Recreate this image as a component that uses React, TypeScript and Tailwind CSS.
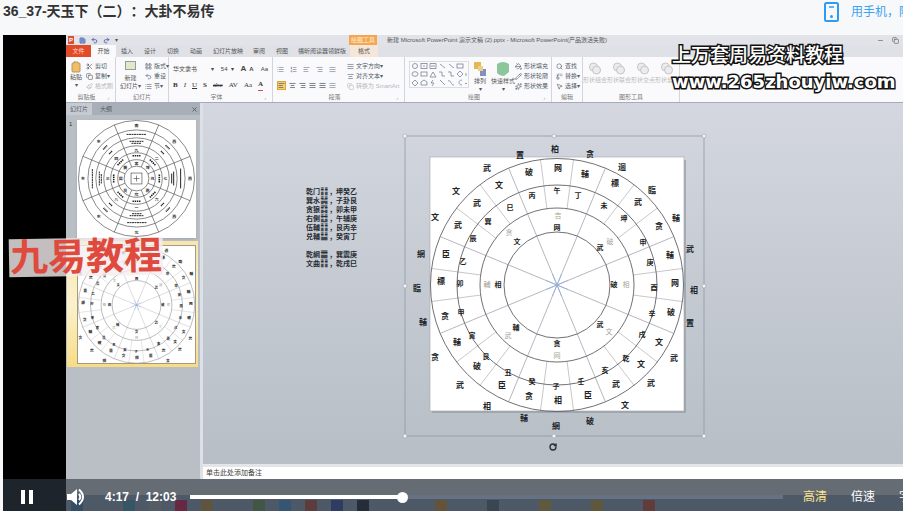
import React, { useState } from 'react';
import { Save, Undo2, Redo2, Scissors, Copy, Paintbrush, Clipboard, Minus, X, Search, Replace, MousePointer2, PaintBucket, Pencil, Sparkles, List, ListOrdered, AlignLeft, AlignCenter, AlignRight, AlignJustify, RotateCw, LayoutGrid } from 'lucide-react';

type Glyph = [number, number, string];

const outside: Glyph[] = [
  [555, 149, '柏'], [590, 154, '贪'], [622, 167, '迴'], [652, 190, '臨'], [676, 218, '輔'], [690, 249, '武'],
  [694, 290, '相'], [690, 323, '置'], [674, 358, '武'], [651, 383, '武'], [625, 405, '文'], [590, 421, '破'],
  [556, 426, '網'], [524, 418, '輔'], [487, 406, '相'], [460, 385, '武'], [435, 357, '贪'], [423, 322, '輔'],
  [417, 288, '臨'], [421, 254, '網'], [435, 217, '文'], [456, 191, '文'], [487, 168, '武'], [520, 155, '置'],
];
const outer: Glyph[] = [
  [558, 168, '网'], [585, 174, '輔'], [615, 183, '標'], [638, 202, '武'], [659, 226, '贪'], [670, 255, '輔'],
  [675, 283, '网'], [671, 312, '破'], [659, 342, '文'], [641, 364, '文'], [616, 384, '武'], [588, 395, '臣'],
  [558, 400, '相'], [529, 396, '贪'], [502, 385, '臣'], [477, 366, '破'], [457, 342, '輔'], [445, 316, '贪'],
  [441, 281, '標'], [446, 254, '臣'], [458, 225, '武'], [477, 203, '武'], [499, 185, '文'], [529, 172, '破'],
];
const mountains: Glyph[] = [
  [557, 190, '午'], [578, 195, '丁'], [604, 205, '未'], [624, 218, '坤'], [643, 242, '申'], [650, 262, '庚'],
  [654, 287, '酉'], [652, 313, '辛'], [642, 334, '戌'], [626, 358, '乾'], [605, 370, '亥'], [581, 381, '壬'],
  [556, 386, '子'], [532, 381, '癸'], [508, 372, '丑'], [486, 356, '艮'], [472, 335, '寅'], [461, 312, '甲'],
  [460, 283, '卯'], [463, 261, '乙'], [473, 238, '辰'], [488, 221, '巽'], [510, 207, '巳'], [532, 195, '丙'],
];
const faint: Glyph[] = [
  [558, 215, '吉'], [610, 241, '破'], [626, 284, '相'], [609, 331, '文'],
  [557, 355, '网'], [508, 335, '武'], [487, 284, '輔'], [509, 232, '贪'],
];
const inner: Glyph[] = [
  [557, 227, '网'], [600, 247, '武'], [614, 284, '破'], [600, 324, '武'],
  [557, 343, '贪'], [516, 327, '輔'], [498, 284, '相'], [517, 241, '文'],
];

const CX = 557;
const CY = 285;

function spoke(cx: number, cy: number, deg: number, from: number, to: number) {
  const a = (deg * Math.PI) / 180;
  return { x1: cx + Math.sin(a) * from, y1: cy - Math.cos(a) * from, x2: cx + Math.sin(a) * to, y2: cy - Math.cos(a) * to };
}

function Glyphs({ items, className }: { items: Glyph[]; className: string }) {
  return (
    <g className={className}>
      {items.map(([x, y, c], i) => (
        <text key={i} x={x} y={y + 3} textAnchor="middle">{c}</text>
      ))}
    </g>
  );
}

function Compass() {
  const angles = Array.from({ length: 24 }, (_, i) => 7.5 + i * 15);
  return (
    <g fontFamily="'Noto Sans CJK SC', sans-serif">
      <g stroke="#b4b4ba" strokeWidth="0.8">
        {angles.map((a) => (
          <line key={a} {...spoke(CX, CY, a, (a - 22.5) % 45 === 0 ? 0 : 77, 126.5)} stroke={(a - 22.5) % 45 === 0 ? '#a3a3b2' : '#b9b9bd'} />
        ))}
      </g>
      <g stroke="#8faee0" strokeWidth="0.8">
        {[22.5, 67.5, 112.5, 157.5, 202.5, 247.5, 292.5, 337.5].map((a) => (
          <line key={a} {...spoke(CX, CY, a, 0, 12)} />
        ))}
      </g>
      <g fill="none" stroke="#606065" strokeWidth="0.9">
        {[53, 77, 100, 126.5].map((r) => <circle key={r} cx={CX} cy={CY} r={r} />)}
      </g>
      <Glyphs items={outside} className="fill-[#20242a] text-[8px] font-bold" />
      <Glyphs items={outer} className="fill-[#222] text-[8px] font-bold" />
      <Glyphs items={mountains} className="fill-[#222] text-[7px] font-bold" />
      <Glyphs items={inner} className="fill-[#222] text-[7px] font-bold" />
      <Glyphs items={faint} className="fill-[#a5a596] text-[7px]" />
    </g>
  );
}

function TrigramWheel() {
  const dirs = [0, 45, 90, 135, 180, 225, 270, 315];
  const at = (d: number, r: number) => spoke(60, 59, d, 0, r);
  return (
    <svg viewBox="0 0 120 119" className="block w-full bg-white" role="img" aria-label="幻灯片 1">
      <g fill="none" stroke="#555" strokeWidth="0.7">
        {[12.5, 19, 26, 33, 41, 49, 58.5].map((r) => <circle key={r} cx="60" cy="59" r={r} />)}
        {dirs.map((d) => <line key={d} {...spoke(60, 59, d + 22.5, 12.5, 58.5)} />)}
        <rect x="54.5" y="53.5" width="11" height="11" />
        <path d="M60 56v6M57 59h6" />
      </g>
      {dirs.map((d) => (
        <g key={d} transform={`rotate(${d} 60 59)`} fill="none" stroke="#222">
          <path d="M56 36h8" strokeWidth="1.6" strokeDasharray="1.5 .7" />
          {d % 90 === 0 && <path d="M50 14.5h20M53 21.5h14M55 23.5h10" strokeDasharray={d === 90 ? undefined : '2 .5'} />}
          {d % 90 !== 0 && <path d="M57 14.5h6M58 22h4" strokeDasharray="1 .5" strokeWidth="1.6" />}
        </g>
      ))}
      <g className="fill-[#333] text-[4px] font-bold" fontFamily="'Noto Sans CJK SC', sans-serif" textAnchor="middle">
        {dirs.map((d, i) => (
          <g key={d}>
            <text x={at(d, 16).x2} y={at(d, 16).y2 + 2}>{'离坤兑乾坎艮震巽'[i]}</text>
            <text x={at(d, 29).x2} y={at(d, 29).y2 + 2}>{'九二七六一八三四'[i]}</text>
            <text x={at(d, 54).x2} y={at(d, 54).y2 + 2}>{'南西西西北东东东'[i]}</text>
          </g>
        ))}
      </g>
    </svg>
  );
}

function Group({ label, width, corner = true, gap = 'gap-1 px-1', children }: { label: string; width: string; corner?: boolean; gap?: string; children: React.ReactNode }) {
  return (
    <section className={`${width} flex shrink-0 flex-col border-r border-[#d3d5da]`}>
      <div className={`${gap} flex h-9 items-start pt-1`}>{children}</div>
      <div className="flex h-[9px] items-center justify-center text-[6px] leading-[9px] text-[#777]">
        <span className="flex-1 text-center">{label}</span>
        {corner && <span className="w-2 text-[5px]">⌟</span>}
      </div>
    </section>
  );
}

function Tool({ icon, children, faded = false }: { icon: React.ReactNode; children?: React.ReactNode; faded?: boolean }) {
  return (
    <button className={`flex h-[10px] items-center gap-[2px] whitespace-nowrap text-[6px] leading-[10px] ${faded ? 'text-[#b5b5b8]' : 'text-[#505a68]'}`}>
      {icon}{children}
    </button>
  );
}

function BigTool({ icon, lines, faded = false }: { icon: React.ReactNode; lines: string[]; faded?: boolean }) {
  return (
    <button className={`flex flex-col items-center whitespace-nowrap text-[6px] leading-[8px] ${faded ? 'text-[#bbb]' : 'text-[#555]'}`}>
      {icon}
      {lines.map((l) => <span key={l}>{l}</span>)}
    </button>
  );
}

const tabs: [string, string][] = [
  ['插入', 'w-[22px]'], ['设计', 'w-6'], ['切换', 'w-[22px]'], ['动画', 'w-6'], ['幻灯片放映', 'w-10'],
  ['审阅', 'w-[22px]'], ['视图', 'w-6'], ['福昕阅读器领鲜版', 'w-14'],
];

function Ribbon() {
  const i = 'size-[7px]';
  return (
    <header className="shrink-0 bg-[#dfe1e6]">
      <div className="flex h-[10px] items-center bg-[#e1e3e8] text-[6px] leading-[10px] text-[#555]">
        <div className="flex w-[283px] items-center gap-[5px] pl-[2px] text-[#4964ae]">
          <span className="bg-[#d95036] px-[1px] text-[6px] leading-[8px] font-bold text-white">P</span>
          <Save className="size-[7px] fill-[#8fa3d6]" /><Undo2 className={i} strokeWidth={3} /><Redo2 className={i} strokeWidth={3} /><span className="text-[#555]">▾</span>
        </div>
        <span className="w-7 bg-[#f4a750] text-center text-[#fff1dc]">绘图工具</span>
        <h2 className="ml-[10px] whitespace-nowrap">新建 Microsoft PowerPoint 演示文稿 (2).pptx - Microsoft PowerPoint(产品激活失败)</h2>
        <span className="ml-auto flex gap-2 pr-1"><Minus className={i} /><Copy className={i} /></span>
      </div>
      <nav className="flex h-3 items-center text-center text-[6px] leading-3 whitespace-nowrap text-[#555]">
        <button className="h-3 w-[25px] bg-[#e34b28] text-[#ffd8c8]">文件</button>
        <button className="h-3 w-[25px] bg-[#fafafc]">开始</button>
        {tabs.map(([t, w]) => <button key={t} className={w}>{t}</button>)}
        <button className="h-3 w-7 bg-[#f4e6d8]">格式</button>
      </nav>
      <div className="flex h-[46px] border-b border-[#a6abb5] bg-[#fafafc]">
        <Group label="剪贴板" width="w-[50px]" gap="gap-1 px-1">
          <BigTool icon={<Clipboard className="size-3 fill-[#f0bd68] text-[#b8955d]" />} lines={['粘贴', '▾']} />
          <div>
            <Tool icon={<Scissors className={i} />}>剪切</Tool>
            <Tool icon={<Copy className={i} />}>复制▾</Tool>
            <Tool faded icon={<Paintbrush className={i} />}>格式刷</Tool>
          </div>
        </Group>
        <Group label="幻灯片" width="w-[53px]" corner={false}>
          <BigTool icon={<span className="mb-1 h-[9px] w-[11px] border border-[#99a] bg-[#e2eac5]" />} lines={['新建', '幻灯片▾']} />
          <div>
            <Tool icon={<LayoutGrid className={i} />}>版式▾</Tool>
            <Tool icon={<Undo2 className={i} />}>重设</Tool>
            <Tool icon={<List className={i} />}>节▾</Tool>
          </div>
        </Group>
        <Group label="字体" width="w-[104px]">
          <div className="w-full">
            <div className="flex h-4 items-center gap-[3px] text-[6px] whitespace-nowrap text-[#444]">
              <span className="w-9">华文隶书</span><span>▾</span><span className="ml-1">54</span><span>▾</span><b className="ml-1 text-[8px]">A</b><b>A</b><span className="ml-1">Aa</span>
            </div>
            <div className="flex h-4 items-center gap-[6px] font-['Liberation_Serif',serif] text-[7px] text-[#333]">
              <b>B</b><i>I</i><u>U</u><b>S</b><s>abc</s><span>AV</span><span>Aa</span><b className="border-b border-[#c55]">A</b>
            </div>
          </div>
        </Group>
        <Group label="段落" width="w-[132px]">
          <div className="w-[66px] text-[#68717e]">
            <div className="flex h-4 items-center gap-[6px]"><List className={i} /><ListOrdered className={i} /><AlignLeft className={i} /><AlignRight className={i} /><AlignJustify className={i} /></div>
            <div className="flex h-4 items-center gap-[3px]">
              <span className="border border-[#d9a63f] bg-[#fbd268]"><AlignLeft className={i} strokeWidth={3} /></span><AlignCenter className={i} strokeWidth={3} /><AlignRight className={i} strokeWidth={3} /><AlignJustify className={i} strokeWidth={3} /><AlignJustify className={i} strokeWidth={3} /><AlignJustify className={i} />
            </div>
          </div>
          <div>
            <Tool icon={<AlignJustify className={i} />}>文字方向▾</Tool>
            <Tool icon={<AlignCenter className={i} />}>对齐文本▾</Tool>
            <Tool faded icon={<Copy className={i} />}>转换为 SmartArt</Tool>
          </div>
        </Group>
        <Group label="绘图" width="w-[147px]">
          <svg viewBox="0 0 60 27" className="h-[27px] w-[60px] shrink-0" fill="none" stroke="#778399" strokeWidth="0.8">
            <rect x=".5" y=".5" width="59" height="26" stroke="#d2d6de" />
            <circle cx="6" cy="5" r="2.5" /><rect x="12" y="2.5" width="6" height="5" /><path d="M14 5h2M21 2.5h6v5h-6zM22 5h4M31 3l5 4M40 3l5 4" /><rect x="48" y="3" width="6" height="4" />
            <ellipse cx="6" cy="13" rx="3" ry="2.3" /><rect x="12" y="11" width="6" height="4" /><path d="M21 16l3-5 3 5zM30 11h3v4h3M39 11h3v4h3M48 13l3-3 3 3-3 3z" />
            <path d="M6 19l3 3-3 3-3-3zM12 24v-3l3-2 3 2v3zM24 19l-2 3h3l-2 3M31 19l5 5M39 20c3-2 3 5 6 4M53 19c-4 0-4 5 0 5M57 12v3M56 22l1 1 1-1" />
          </svg>
          <BigTool icon={<svg viewBox="0 0 14 16" className="h-4 w-[14px]"><path fill="#e4b954" d="M1 1h7v7H1z" /><path fill="#8291bd" d="M7 8h6v7H7z" /><path fill="#ead187" d="M5 5h5v5H5z" /></svg>} lines={['排列', '▾']} />
          <BigTool icon={<svg viewBox="0 0 14 16" className="h-4 w-[14px]"><path fill="#8cc69b" d="M1 3q6-4 12 0v8l-5 4q-7-1-7-4z" /></svg>} lines={['快速样式', '▾']} />
          <div className="-ml-1">
            <Tool icon={<PaintBucket className={i} />}>形状填充</Tool>
            <Tool icon={<Pencil className={i} />}>形状轮廓</Tool>
            <Tool icon={<Sparkles className={i} />}>形状效果</Tool>
          </div>
        </Group>
        <Group label="编辑" width="w-[31px]" corner={false}>
          <div>
            <Tool icon={<Search className={i} />}>查找</Tool>
            <Tool icon={<Replace className={i} />}>替换▾</Tool>
            <Tool icon={<MousePointer2 className={i} />}>选择▾</Tool>
          </div>
        </Group>
        <Group label="图形工具" width="w-[97px]" corner={false} gap="gap-0">
          {['形状组合', '形状联合', '形状交点', '形状剪除'].map((t) => (
            <BigTool key={t} faded icon={<svg viewBox="0 0 14 15" className="h-[15px] w-[14px]" stroke="#c4c4c8" fill="#ececee"><circle cx="5.5" cy="6" r="4" /><circle cx="8.5" cy="9" r="4" /></svg>} lines={[t]} />
          ))}
        </Group>
      </div>
    </header>
  );
}

const notes = [
  ['乾门', '䷁', '坤癸乙'], ['巽水', '䷟', '子卦艮'], ['贪狼', '䷃', '卯未甲'], ['右側', '䷂', '午辅庚'],
  ['伍輔', '䷁', '艮丙辛'], ['兑輔', '䷊', '癸寅丁'], [],
  ['乾網', '䷀', '巽震庚'], ['文曲', '䷁', '乾戌巳'],
];

function SlideList() {
  return (
    <aside className="flex w-[134px] shrink-0 flex-col bg-[#babfc6]">
      <div className="flex h-3 shrink-0 items-center bg-[#a9afb9] text-[6px] leading-3 text-[#555c66]">
        <button className="h-3 w-[26px] bg-[#c6cad2]">幻灯片</button>
        <button className="h-3 w-7">大纲</button>
        <button className="mr-[2px] ml-auto" aria-label="关闭"><X className="size-[7px]" strokeWidth={3} /></button>
      </div>
      <div className="flex h-[126px] items-start pt-[5px] pl-[3px]">
        <span className="w-2 text-[6px] text-[#333]">1</span>
        <div className="w-[119px] shadow-sm"><TrigramWheel /></div>
      </div>
      <div className="mr-[2px] ml-[1px] bg-gradient-to-b from-[#f7e6ae] via-[#fbf1cd] to-[#f8dc83] pt-1 pr-[2px] pb-[3px] pl-[10px]">
        <svg viewBox="430 157 254 255" className="block w-full border border-[#a59b7c] bg-white" role="img" aria-label="幻灯片 2"><Compass /></svg>
      </div>
    </aside>
  );
}

function Stage() {
  return (
    <main className="relative min-h-0 flex-1 overflow-hidden bg-gradient-to-b from-[#d4d7df] to-[#b7bec5]">
      <div className="absolute top-[84px] left-[103px] font-['Noto_Sans_CJK_SC',sans-serif] text-[7px] leading-[9px] font-bold text-[#252a31]">
        {notes.map((n, i) => (
          <p key={i} className="flex h-[9px]"><span className="w-[14px]">{n[0]}</span><span className="w-[10px] font-['DejaVu_Sans',sans-serif] text-[9px] leading-[9px]">{n[1]}</span><span className="w-[6px]">{n.length ? ',' : ''}</span><span>{n[2]}</span></p>
        ))}
      </div>
      <svg viewBox="397 130 316 328" className="absolute top-[27px] left-[194px] h-[328px] w-[316px]" role="img" aria-label="罗盘">
        <rect x="432" y="160" width="254" height="253" fill="#8d949c" opacity=".6" />
        <rect x="430" y="157" width="254" height="254" fill="#fff" stroke="#a1a6ad" strokeWidth=".6" />
        <Compass />
        <rect x="405" y="136" width="299" height="300" fill="none" stroke="#9199a5" strokeWidth=".8" />
        {[[405, 136], [554, 136], [704, 136], [405, 286], [704, 286], [405, 436], [554, 436], [704, 436]].map(([x, y]) => (
          <circle key={`${x}-${y}`} cx={x} cy={y} r="2" fill="#f3f5f8" stroke="#8b94a0" strokeWidth=".5" />
        ))}
        <RotateCw x="549" y="443" width="8" height="8" strokeWidth={4} color="#2b3035" />
      </svg>
    </main>
  );
}

const taskIcons = ['bg-[#468ebb]', 'bg-transparent', 'bg-[#53a7c5]', 'bg-[#bdbdc0]', 'bg-[#f3104f]', 'bg-[#d9a23f]', 'bg-transparent', 'bg-[#75a850]', 'bg-[#4aa4f2]', 'bg-[#d4503d]', 'bg-[#3d4fb8]', 'bg-[#151f28]', 'bg-transparent', 'bg-transparent', 'bg-[#e69f31]', 'bg-transparent', 'bg-[#5e6f7f]', 'bg-transparent', 'bg-[#d9b439]', 'bg-transparent', 'bg-[#d9ae39]', 'bg-transparent', 'bg-[#df5132]'];

function PlayerControls() {
  const [time, setTime] = useState(257);
  const done = (time / 723) * 100;
  return (
    <div className="absolute inset-x-0 bottom-0 flex h-8 items-center overflow-hidden bg-[#2b333f]/70 pt-1 whitespace-nowrap text-white">
      <button aria-label="暂停" className="ml-[18px] flex w-3 justify-between"><span className="h-[14px] w-1 bg-white" /><span className="h-[14px] w-1 bg-white" /></button>
      <button aria-label="音量" className="ml-[34px]">
        <svg viewBox="0 0 18 18" className="size-[18px]" fill="none" stroke="#fff" strokeWidth="2"><path fill="#fff" stroke="none" d="M0 6h4l6-5v16l-6-5H0z" /><path d="M12 6q2.500 3 0 6M12 1.500q8 7.500 0 15" /></svg>
      </button>
      <span className="ml-5 w-[72px] text-[12px] leading-4 font-bold">4:17&nbsp; /&nbsp; 12:03</span>
      <input
        type="range" min="0" max="723" value={time} onChange={(e) => setTime(Number(e.target.value))} aria-label="播放进度"
        className="ml-[13px] h-1 min-w-0 flex-1 appearance-none [&::-webkit-slider-thumb]:size-[11px] [&::-webkit-slider-thumb]:appearance-none [&::-webkit-slider-thumb]:rounded-full [&::-webkit-slider-thumb]:bg-white"
        style={{ background: `linear-gradient(to right, #fff ${done}%, rgba(160,170,195,.3) ${done}%)` }}
      />
      <button className="ml-5 text-[12px] text-[#ffe58a]">高清</button>
      <button className="ml-6 text-[12px]">倍速</button>
      <button className="ml-6 w-1 text-left text-[12px]">字幕</button>
    </div>
  );
}

export default function App() {
  return (
    <div className="flex h-screen flex-col overflow-hidden bg-[#f7f8fa] font-['Liberation_Sans','Noto_Sans_CJK_SC',sans-serif]">
      <header className="flex h-[35px] shrink-0 items-start pl-[3px]">
        <h1 className="pt-[1px] text-[14px] leading-5 font-bold whitespace-nowrap text-[#333] [text-spacing-trim:space-all]">36_37-天玉下（二）：大卦不易传</h1>
        <a href="#phone" className="ml-auto flex w-[79px] items-center gap-3 overflow-hidden pt-[2px] text-[12px] leading-5 whitespace-nowrap text-[#3da2f2]">
          <svg viewBox="0 0 15 20" className="h-5 w-[15px] shrink-0" fill="none" stroke="#2e9bf2"><rect x="1" y="1" width="13" height="18" rx="1.5" strokeWidth="2" /><path d="M5 5h5" strokeWidth="1.5" /><circle cx="7.5" cy="14.5" r="1.5" fill="#2e9bf2" stroke="none" /></svg>
          用手机，随时随地看
        </a>
      </header>
      <div className="relative ml-[3px] flex min-h-0 flex-1 overflow-hidden bg-black">
        <div className="w-[63px] shrink-0" />
        <div className="flex min-w-0 flex-1 flex-col">
          <Ribbon />
          <div className="flex min-h-0 flex-1">
            <SlideList />
            <div className="flex min-w-0 flex-1 flex-col border-l-[3px] border-[#dde0e6]">
              <Stage />
              <div className="h-[15px] shrink-0 border-t-[3px] border-[#e3e5e8] bg-white pl-[3px] text-[7px] leading-3 text-[#444]">单击此处添加备注</div>
            </div>
          </div>
          <div className="h-4 shrink-0 bg-[#eef0f2]" />
          <div className="flex h-4 shrink-0 items-end gap-[14px] overflow-hidden bg-[#9fb3c6] pl-[5px]">
            {taskIcons.map((c, i) => <span key={i} className={`${c} h-[11px] w-3 shrink-0`} />)}
          </div>
        </div>
        <div className="absolute top-[203px] left-[6px] -rotate-1 bg-[#f5eeee]/80 px-[1px] text-[38px] leading-[38px] font-bold whitespace-nowrap text-[#e04a3e]">九易教程</div>
        <div className="absolute top-[7px] right-1 w-[227px] text-white [-webkit-text-stroke:3px_#111] [paint-order:stroke_fill]">
          <p className="font-['Noto_Sans_CJK_SC',sans-serif] text-[19px] leading-6 font-medium whitespace-nowrap">上万套周易资料教程</p>
          <p className="font-['DejaVu_Sans',sans-serif] text-[18px] leading-8 font-bold whitespace-nowrap">www.265zhouyiw.com</p>
        </div>
        <PlayerControls />
      </div>
    </div>
  );
}
